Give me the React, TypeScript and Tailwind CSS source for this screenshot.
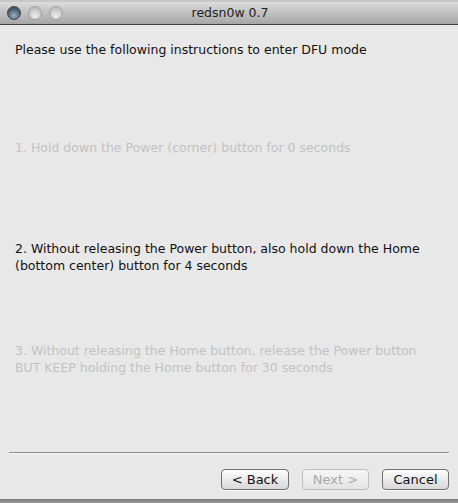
export default function App() {
  const font = { fontFamily: '"DejaVu Sans", "Liberation Sans", sans-serif' };
  return (
    <div className="w-[458px] h-[503px] bg-[#8a8a8a] flex flex-col overflow-hidden" style={font}>
      {/* title bar */}
      <div className="h-[25px] shrink-0 flex items-center relative border-t-2 border-t-[#c8c8c8] border-b border-b-[#404040] bg-gradient-to-b from-[#dcdcdc] to-[#a6a6a6]">
        <div className="absolute left-[7px] top-[4px] flex gap-[7px]">
          <span className="w-[14px] h-[14px] rounded-full bg-[radial-gradient(circle_at_50%_70%,#9fb0c0,#4e5e6e_60%,#36414c)] border border-[#3c4650]" />
          <span className="w-[14px] h-[14px] rounded-full bg-[radial-gradient(circle_at_50%_75%,#eeeeee,#c4c4c4_65%,#b0b0b0)] border border-[#a0a0a0]" />
          <span className="w-[14px] h-[14px] rounded-full bg-[radial-gradient(circle_at_50%_75%,#eeeeee,#c4c4c4_65%,#b0b0b0)] border border-[#a0a0a0]" />
        </div>
        <div className="flex-1 text-center text-[12.5px] text-[#222] pl-[2px]">redsn0w 0.7</div>
      </div>
      {/* body */}
      <div className="flex-1 bg-[#e8e8e8] flex flex-col text-[12.5px] leading-[17px]">
        <div className="px-[15px] pt-[16px] text-[#111]">Please use the following instructions to enter DFU mode</div>
        <div className="px-[15px] pt-[81px] text-[#c2c2c2]">1. Hold down the Power (corner) button for 0 seconds</div>
        <div className="px-[15px] pt-[84px] text-[#111]">
          2. Without releasing the Power button, also hold down the Home
          <br />
          (bottom center) button for 4 seconds
        </div>
        <div className="px-[15px] pt-[68px] text-[#c2c2c2]">
          3. Without releasing the Home button, release the Power button
          <br />
          BUT KEEP holding the Home button for 30 seconds
        </div>
        <div className="flex-1" />
        <div className="mx-[9px] h-[2px] bg-[#8c8c8c] border-b border-b-[#f4f4f4]" />
        <div className="flex justify-end gap-[13px] pr-[9px] pt-[15px] pb-[9px]">
          <button className="w-[68px] h-[21px] rounded-[4px] border border-[#707070] bg-gradient-to-b from-[#fdfdfd] to-[#d8d8d8] text-[13px] text-[#111] shadow-[0_1px_0_#f8f8f8]">&lt; Back</button>
          <button className="w-[67px] h-[21px] rounded-[4px] border border-[#bdbdbd] bg-gradient-to-b from-[#f6f6f6] to-[#e4e4e4] text-[13px] text-[#a8a8a8]">Next &gt;</button>
          <button className="w-[67px] h-[21px] rounded-[4px] border border-[#707070] bg-gradient-to-b from-[#fdfdfd] to-[#d8d8d8] text-[13px] text-[#111] shadow-[0_1px_0_#f8f8f8]">Cancel</button>
        </div>
      </div>
      <div className="h-[4px] shrink-0 bg-gradient-to-b from-[#7a7a7a] to-[#9a9a9a]" />
    </div>
  );
}
